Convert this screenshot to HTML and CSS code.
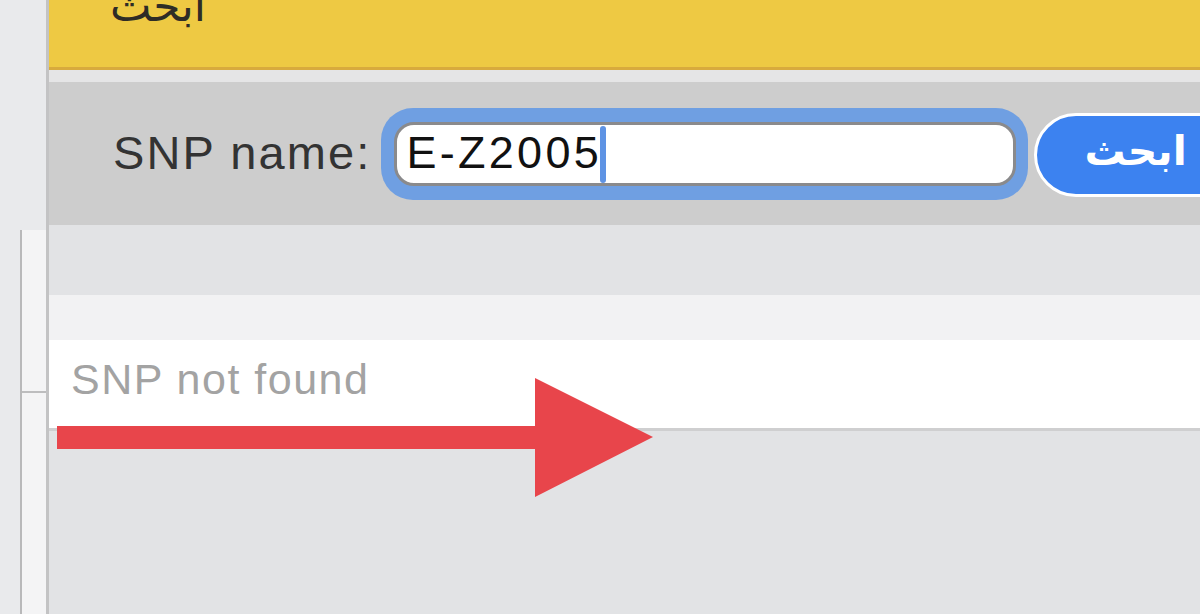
FILE: index.html
```html
<!DOCTYPE html>
<html lang="en">
<head>
<meta charset="utf-8">
<title>SNP search</title>
<link rel="stylesheet" href="styles.css">
</head>
<body>
<div class="page">
  <aside class="sidebar">
    <div class="side-panel">
      <div class="side-cell"></div>
      <div class="side-cell"></div>
    </div>
  </aside>
  <main class="main">
    <header class="topbar"><span class="top-title" dir="rtl">ابحث</span></header>
    <div class="strip"></div>
    <form class="searchbar">
      <label class="label">SNP name:</label>
      <div class="ring">
        <div class="field"><span class="value">E-Z2005</span><span class="caret"></span></div>
      </div>
      <button type="button" class="btn"><span dir="rtl">ابحث</span></button>
    </form>
    <div class="gap"></div>
    <div class="subhead"></div>
    <div class="result">SNP not found</div>
    <div class="rest"></div>
    <svg class="arrow" width="600" height="120" viewBox="0 0 600 120">
      <polygon points="0,48 478,48 478,0 596,59 478,119 478,71 0,71" fill="#e8454b"/>
    </svg>
  </main>
</div>
</body>
</html>
```

FILE: styles.css
```css
html, body {
  margin: 0;
  padding: 0;
  height: 100%;
  overflow: hidden;
}
body {
  font-family: "Liberation Sans", Arial, sans-serif;
  background: #e2e3e5;
}
.page {
  display: flex;
  height: 614px;
}
.sidebar {
  width: 49px;
  flex: none;
  background: #e9eaec;
  padding-top: 230px;
  box-sizing: border-box;
  border-right: 3px solid #c3c3c4;
  display: flex;
  flex-direction: column;
}
.side-panel {
  margin-left: 20px;
  flex: 1;
  border-left: 2px solid #b9b9ba;
  background: #f4f4f5;
  display: flex;
  flex-direction: column;
}
.side-cell:first-child {
  height: 161px;
  border-bottom: 2px solid #bdbdbe;
}
.main {
  flex: 1;
  position: relative;
  display: flex;
  flex-direction: column;
  overflow: hidden;
}
.topbar {
  height: 67px;
  background: #eec943;
  border-bottom: 3px solid #d8aa3d;
  padding-left: 61px;
  overflow: hidden;
  flex: none;
}
.top-title {
  display: block;
  font-family: "DejaVu Sans", sans-serif;
  font-size: 44px;
  line-height: 50px;
  color: #2e2c26;
  margin-top: -19px;
  width: 110px;
  text-align: left;
}
.strip {
  height: 12px;
  background: #e5e5e6;
  flex: none;
}
.searchbar {
  margin: 0;
  height: 143px;
  background: #cdcdcd;
  display: flex;
  align-items: center;
  flex: none;
  padding-left: 64px;
  box-sizing: border-box;
}
.label {
  font-size: 47px;
  letter-spacing: 2.1px;
  color: #333333;
  margin-right: 10px;
  margin-top: -3px;
  white-space: nowrap;
  flex: none;
}
.ring {
  width: 647px;
  height: 92px;
  box-sizing: border-box;
  background: #6f9fe2;
  border-radius: 32px;
  padding: 14px 12px 14px 13px;
  flex: none;
  margin-top: 1px;
}
.field {
  height: 100%;
  box-sizing: border-box;
  background: #ffffff;
  border: 3px solid #8a8a8c;
  border-radius: 20px;
  display: flex;
  align-items: center;
  padding-left: 9px;
}
.value {
  font-size: 45px;
  letter-spacing: 3.3px;
  color: #111111;
  margin-top: -2px;
  white-space: nowrap;
}
.caret {
  width: 6px;
  height: 57px;
  background: #5e93e4;
  border-radius: 3px;
  margin-left: -2px;
}
.btn {
  margin-left: 6px;
  height: 84px;
  width: 220px;
  flex: none;
  background: #3c82f0;
  border: 3px solid #ffffff;
  border-radius: 42px;
  color: #ffffff;
  font-family: "DejaVu Sans", sans-serif;
  font-size: 41px;
  font-weight: bold;
  text-align: left;
  padding: 0 0 8px 47px;
  white-space: nowrap;
  margin-top: 2px;
}
.gap {
  height: 70px;
  background: #e2e3e5;
  flex: none;
}
.subhead {
  height: 45px;
  background: #f2f2f3;
  flex: none;
}
.result {
  background: #ffffff;
  border-bottom: 3px solid #cfcfd0;
  color: #a3a3a3;
  font-size: 43px;
  letter-spacing: 1.5px;
  display: flex;
  align-items: center;
  padding-left: 22px;
  padding-bottom: 10px;
  box-sizing: border-box;
  height: 91px;
  flex: none;
}
.rest {
  flex: 1;
  background: #e2e3e5;
}
.arrow {
  position: absolute;
  left: 8px;
  top: 378px;
}
```
